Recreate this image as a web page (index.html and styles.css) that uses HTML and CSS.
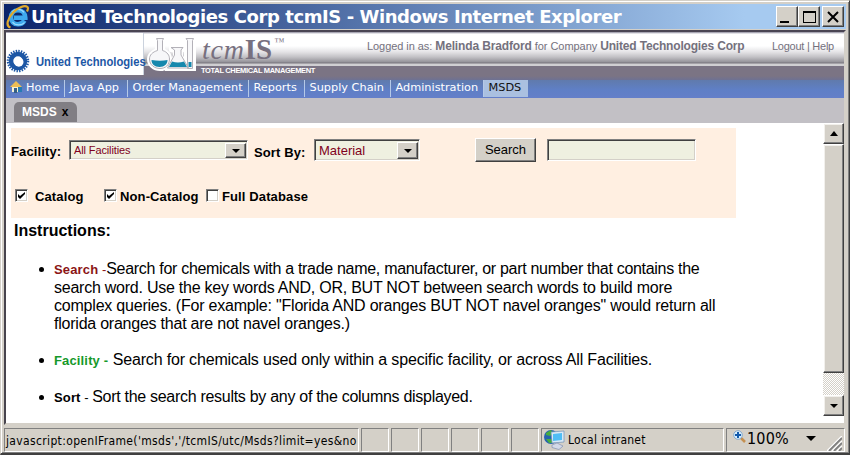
FILE: index.html
```html
<!DOCTYPE html>
<html lang="en">
<head>
<meta charset="utf-8">
<title>United Technologies Corp tcmIS</title>
<link rel="stylesheet" href="styles.css">
</head>
<body>
<div class="window">
  <div class="titlebar">
    <svg class="ie" width="24" height="24" viewBox="0 0 24 24">
      <path d="M18.500 15.500C17 18 15 19.300 12 19.300c-4.200 0-7-3-7-7S7.800 5.300 12 5.300s7.300 3 7.300 7.500H8" fill="none" stroke="#3fa9ee" stroke-width="4.600"/>
      <path d="M18.500 17.500c-2 2.800-9 3.800-12-.5M6 7c3-3.500 9.500-3.500 12 .5" fill="none" stroke="#9bdcff" stroke-width="1.200"/>
      <path d="M4.500 22.500C-1 21 2 13 7 7.500S19 0 21.500 2c1 1 .5 2.500-.5 4.500" fill="none" stroke="#dfa92c" stroke-width="2.200"/>
    </svg>
    <h1 class="title">United Technologies Corp tcmIS - Windows Internet Explorer</h1>
    <div class="winbtns">
      <span class="wbtn"><svg width="18" height="17"><path d="M2 13h9v2H2z"/></svg></span>
      <span class="wbtn"><svg width="18" height="17"><path d="M3 3h13v12H3zM4 5v9h11V5z" fill-rule="evenodd"/></svg></span>
      <span class="wbtn gap"><svg width="18" height="17"><path d="M4 4l10 10M14 4L4 14" stroke="#000" stroke-width="2"/></svg></span>
    </div>
  </div>
  <div class="view">
    <header class="banner">
      <div class="utc">
        <svg width="24" height="24" viewBox="-12 -12 24 24">
          <circle r="7" fill="none" stroke="#1d57a5" stroke-width="4.500"/>
          <circle r="9.500" fill="none" stroke="#1d57a5" stroke-width="3.500" stroke-dasharray="1.350 1.137"/>
          <circle cx=".8" cy="1" r="4.700" fill="#fff"/>
        </svg>
        <span class="utcname">United Technologies</span>
      </div>
      <svg class="flasks" width="52" height="38" viewBox="0 0 52 38">
        <path d="M12 2h6v12c5 2 7 5 7 9 0 6-4 10-10 10S4 29 4 23c0-4 3-7 8-9zM26 11h12v3l-2 1v5l8 13H23l7-13v-5l-4-1zM41 2h8v31h-8z" fill="#f6f6f8" stroke="#fff" stroke-width="4"/>
        <g fill="#f7f7f9" stroke="#b3b1b8"><path d="M11.500 2.500h7l-1 2v10c5 1.500 7 5 7 8.500 0 6-4 9.500-9.500 9.500S4.500 29 4.500 23c0-4 3-7 8-8.500v-10zM26 11.500h12l-2 2.500v5l7.500 13H22.500l7-13v-5zM41 2.500h7.500l-1 2v28h-5v-28z"/></g>
        <path d="M6.500 24q9 1.500 16 0c0 4-3 7-8 7s-8-3-8-7zM27 25.500q6 2 12 0l3 5.500H24zM43.500 26h3v5h-3z" fill="#1688ad"/>
      </svg>
      <div class="brand">
        <div class="tcm"><i>tcm</i><b>IS</b><sup>™</sup></div>
        <div class="tag">TOTAL CHEMICAL MANAGEMENT</div>
      </div>
      <div class="login"><span class="t-log">Logged in as: </span><b class="t-name">Melinda Bradford</b><span class="t-for"> for Company </span><b class="t-corp">United Technologies Corp</b></div>
      <div class="links">Logout | Help</div>
    </header>
    <nav class="nav">
      <a class="home"><svg width="12" height="13"><path d="M0 7l6-6 6 6z" fill="#edbd54"/><path d="M2 7h9v5H2z" fill="#f6f0d2"/><path d="M8 7h4v5H8z" fill="#257bb4"/><path d="M4 8h3v5H4z" fill="#365f86"/></svg><span>Home</span></a>
      <a class="java">Java App</a><a class="order">Order Management</a><a class="reports">Reports</a><a class="supply">Supply Chain</a><a class="admin">Administration</a><a class="msds">MSDS</a>
    </nav>
    <div class="tabs"><div class="tab"><span class="tabname">MSDS</span><span class="tabx">x</span></div></div>
    <div class="frame">
      <main class="page">
        <form class="search">
          <div class="row">
            <label class="l-fac">Facility:</label>
            <div class="select s-fac"><span>All Facilities</span><i class="drop"></i></div>
            <label class="l-sort">Sort By:</label>
            <div class="select s-mat"><span>Material</span><i class="drop"></i></div>
            <div class="button">Search</div>
            <div class="input"></div>
          </div>
          <div class="checks">
            <span class="box"><svg width="9" height="9"><path d="M1 3v3l2 2 5-5V1L3 5z"/></svg></span><label class="c-cat">Catalog</label>
            <span class="box"><svg width="9" height="9"><path d="M1 3v3l2 2 5-5V1L3 5z"/></svg></span><label class="c-non">Non-Catalog</label>
            <span class="box"></span><label class="c-full">Full Database</label>
          </div>
        </form>
        <h2>Instructions:</h2>
        <ul>
          <li><b class="k red">Search</b><span class="dash red"> -</span><span class="ln l1">Search for chemicals with a trade name, manufacturer, or part number that contains the</span><br><span class="ln l2">search word. Use the key words AND, OR, BUT NOT between search words to build more</span><br><span class="ln l3">complex queries. (For example: "Florida AND oranges BUT NOT navel oranges" would return all</span><br><span class="ln l4">florida oranges that are not navel oranges.)</span></li>
          <li><b class="k green">Facility -</b> <span class="ln l5">Search for chemicals used only within a specific facility, or across All Facilities.</span></li>
          <li><b class="k black">Sort</b><span class="dash"> - </span><span class="ln l6">Sort the search results by any of the columns displayed.</span></li>
        </ul>
      </main>
      <div class="scroll"><div class="sbtn up"></div><div class="thumb"></div><div class="track"></div><div class="sbtn down"></div></div>
    </div>
  </div>
  <footer class="status">
    <div class="cell url"><span>javascript:openIFrame('msds','/tcmIS/utc/Msds?limit=yes&amp;no</span></div>
    <div class="cell"></div><div class="cell"></div><div class="cell"></div><div class="cell"></div><div class="cell"></div><div class="cell"></div>
    <div class="cell zone"><svg width="21" height="20" viewBox="0 0 21 20"><circle cx="7" cy="7" r="7" fill="#2563ae"/><path d="M2 3l5-3 2 3-3 3-4-1zM2 9l5 0 2 4-4 0z" fill="#46ad3e"/><path d="M7 2l13-1v11l-12 1z" fill="#d9e9f6" stroke="#6d8fb4" stroke-width=".7"/><path d="M9 4l9-1v7l-9 1z" fill="#50bdf4"/><path d="M8 15l5-2 6 3-4 3.500-7-2z" fill="#d2d9e8" stroke="#8491b0" stroke-width=".7"/></svg><span>Local intranet</span></div>
    <div class="cell zoom"><svg width="13" height="13"><path d="M8 8l4 4" stroke="#c59050" stroke-width="2.500"/><circle cx="5" cy="5" r="4.300" fill="#d7efff" stroke="#87a9cb"/><path d="M5 2v6M2 5h6" stroke="#145bad" stroke-width="2"/></svg><span>100%</span><i class="arrow"></i><svg class="grip" width="15" height="15"><path d="M0 15L15 0M5 15L15 5M10 15l5-5" stroke="#fff" stroke-width="1.500"/><path d="M2 15L15 2M7 15l8-8M12 15l3-3" stroke="#808080" stroke-width="1.800"/></svg></div>
  </footer>
</div>
</body>
</html>
```
FILE: styles.css
```css
* { box-sizing: border-box; }
body { margin: 0; background: #d4d0c8; font-family: "Liberation Sans", Arial, sans-serif; color: #000; overflow: hidden; }
svg { display: block; flex: none; }
.window { width: 850px; height: 455px; display: flex; flex-direction: column; padding: 3px 2px 2px 3px; border: 1px solid #d4d0c8; border-right: 1px solid #404040; border-bottom: 2px solid #404040; box-shadow: inset 1px 1px #fff, inset -1px -1px #808080; white-space: nowrap; }
.titlebar { height: 25px; width: 842px; display: flex; align-items: center; padding-left: 2px; background: linear-gradient(90deg, #0a246a, #a6caf0 88%); }
.title { margin: 0 0 0 1px; width: 605px; height: 25px; color: #fff; font: bold 18px/26px "DejaVu Sans", sans-serif; letter-spacing: -.42px; }
.winbtns { display: flex; margin-left: 140px; }
.wbtn { width: 22px; height: 21px; background: #d4d0c8; border: 1px solid; border-color: #fff #404040 #404040 #fff; box-shadow: inset -1px -1px #808080; padding: 1px; }
.gap { margin-left: 2px; }
.view { width: 842px; height: 395px; margin-top: 1px; background: #fff; border: 2px solid; border-color: #4a4553 #d4d0c8 #d4d0c8 #47444d; display: flex; flex-direction: column; }
.banner { height: 48px; flex: none; display: flex; background: linear-gradient(#8c899a 0, #fff 2px, #fff 14px, #e4e3e6 20px, #c2c1c5 25px, #95939a 30px, #77747c 31px, #d0cfd2 32px, #d0cfd2 34px, #7b7484 34px, #7b7484 44px, #6e7193 48px); }
.utc { width: 138px; height: 42px; margin-top: 1px; background: #fff; display: flex; border-right: 1px solid #cbd2dd; padding-top: 16px; flex: none; }
.utcname { display: block; width: 108px; margin: 5px 0 0 6px; font: bold 13px/15px "Liberation Sans", sans-serif; color: #1d57a5; transform: scaleX(.865); transform-origin: 0 0; }
.flasks { margin: 4px 0 0 1px; }
.brand { width: 150px; margin-left: 4px; padding-top: 1px; color: #77707f; font-family: "Liberation Serif", serif; }
.tcm { height: 32px; line-height: 32px; font-size: 29px; padding-left: 1px; }
.tcm i { font-size: 28px; letter-spacing: .8px; }
.tcm sup { font-size: 10px; vertical-align: 14px; line-height: 0; margin-left: 2px; }
.tag { color: #fff; font: bold 7.500px/9px "Liberation Sans", sans-serif; letter-spacing: -.33px; margin-top: 1px; }
.login { width: 405px; margin-left: 16px; padding-top: 7px; color: #74717d; line-height: 14px; font-size: 12px; white-space: pre; }
.t-log, .t-for, .links { font-size: 11px; }
.t-log { letter-spacing: -.06px; }
.t-name { letter-spacing: -.14px; }
.t-for { letter-spacing: -.05px; }
.t-corp { letter-spacing: -.17px; }
.links { padding-top: 8px; line-height: 13px; color: #74717d; letter-spacing: -.25px; }
.nav { height: 18px; flex: none; display: flex; background: linear-gradient(#607aac, #5f7fc6 10px, #647fc9); font: 11.300px/15px "DejaVu Sans", sans-serif; color: #fff; }
.nav a { height: 17px; border-left: 1px solid #b5c9e7; padding-left: 4.500px; }
.nav .home { width: 58px; border: 0; display: flex; padding-left: 4px; }
.home span { margin-left: 4px; }
.java { width: 63px; } .order { width: 121px; } .reports { width: 56px; } .supply { width: 86px; } .admin { width: 93px; }
.nav .msds { width: 45px; background: #aac0e0; color: #111; }
.tabs { height: 25px; flex: none; background: #c2c0c5; padding: 4px 0 0 8px; }
.tab { width: 63px; height: 20px; background: #817e84; border-radius: 5px 6px 0 0; color: #fff; font: bold 12px/20px "Liberation Sans", sans-serif; display: flex; padding-left: 8px; }
.tabx { color: #000; margin-left: 5px; }
.frame { height: 300px; display: flex; flex: none; }
.page { width: 817px; padding: 5px 0 0 5px; }
.search { width: 725px; height: 90px; background: #ffefe1; margin: 0; font-weight: bold; font-size: 13px; line-height: 15px; }
.row { display: flex; height: 60px; padding-top: 10px; }
.l-fac { width: 58px; padding-top: 6px; }
.select, .input { background: #eff0e0; border: 1px solid; border-color: #808080 #fff #fff #808080; box-shadow: inset 1px 1px #404040, inset -1px -1px #d4d0c8; }
.select { display: flex; justify-content: space-between; padding: 2px 1px 1px 2px; font-weight: normal; color: #800020; }
.select span { padding-left: 2px; }
.s-fac { width: 179px; height: 20px; margin-top: 2px; font-size: 11px; line-height: 15px; letter-spacing: -.12px; }
.s-mat { width: 106px; height: 22px; margin-top: 1px; line-height: 18px; }
.drop, .arrow { display: flex; align-items: center; justify-content: center; }
.drop { width: 21px; background: #d4d0c8; border: 1px solid; border-color: #fff #404040 #404040 #fff; box-shadow: inset -1px -1px #808080; }
.drop::after, .arrow::after, .down::after { content: ""; border: 4px solid transparent; border-top-color: #000; border-bottom: 0; }
.arrow::after { border-width: 5px 5px 0; }
.l-sort { width: 60px; margin-left: 6px; padding-top: 7px; }
.button { width: 61px; height: 24px; margin-left: 55px; background: #d4d0c8; border: 1px solid; border-color: #fff #404040 #404040 #fff; box-shadow: inset -1px -1px #808080; text-align: center; font-weight: normal; line-height: 22px; }
.input { width: 149px; height: 22px; margin: 1px 0 0 11px; }
.checks { display: flex; padding-left: 4px; }
.box { width: 13px; height: 13px; background: #fff; border: 1px solid; border-color: #808080 #fff #fff #808080; box-shadow: inset 1px 1px #404040, inset -1px -1px #d4d0c8; padding: 1px; margin-top: 1px; }
.checks label { padding-top: 1px; }
.c-cat { width: 69px; margin-left: 7px; } .c-non { width: 86px; margin-left: 3px; } .c-full { margin-left: 3px; }
.search label { font-size: 13px; letter-spacing: .12px; }
h2 { margin: 4px 0 0 3px; font-size: 16px; line-height: 18px; }
ul { list-style: none; margin: 20px 0 0 43px; padding: 0; font-size: 16px; line-height: 18px; }
li { margin-bottom: 19px; position: relative; height: 18px; }
li:first-child { height: 72px; }
li::before { content: ""; position: absolute; left: -15px; top: 7px; width: 5px; height: 5px; border-radius: 50%; background: #000; }
.k { font-size: 13px; letter-spacing: .15px; }
.dash { font-size: 13px; white-space: pre; }
.l1 { letter-spacing: -.3px; } .l2 { letter-spacing: -.24px; } .l3 { letter-spacing: -.21px; }
.l4 { letter-spacing: -.23px; } .l5 { letter-spacing: -.17px; } .l6 { letter-spacing: -.29px; }
.red { color: #8b1515; } .green { color: #16992b; }
.scroll { width: 21px; display: flex; flex-direction: column; padding-bottom: 7px; }
.sbtn, .thumb { background: #d4d0c8; border: 1px solid; border-color: #fff #404040 #404040 #fff; box-shadow: inset -1px -1px #808080, inset 1px 1px #f2f0ec; }
.sbtn { height: 21px; display: flex; align-items: center; justify-content: center; }
.up::after { content: ""; border: 4px solid transparent; border-bottom: 5px solid #000; border-top: 0; }
.thumb { height: 229px; }
.track { flex: 1; background: repeating-conic-gradient(#d4d0c8 0 25%, #fff 0 50%) 0 0/2px 2px; }
.status { display: flex; height: 24px; margin-top: 3px; gap: 2px; }
.cell { width: 28px; height: 24px; border: 1px solid; border-color: #808080 #fff #fff #808080; flex: none; }
.url { width: 355px; font: 12px/25px "DejaVu Sans Condensed", "DejaVu Sans", sans-serif; letter-spacing: .35px; padding-left: 1px; }
.zone { width: 183px; display: flex; align-items: center; padding-left: 2px; font: 12px/22px "DejaVu Sans Condensed", "DejaVu Sans", sans-serif; letter-spacing: .25px; }
.zone span { margin-left: 3px; }
.zoom { width: 119px; display: flex; padding: 1px 0 0 6px; font: 16px/17px "DejaVu Sans Condensed", sans-serif; }
.zoom span { width: 56px; margin-left: 1px; letter-spacing: .2px; }
.arrow { width: 10px; height: 16px; margin-left: 3px; }
.grip { margin: 6px 0 0 11px; }
```
